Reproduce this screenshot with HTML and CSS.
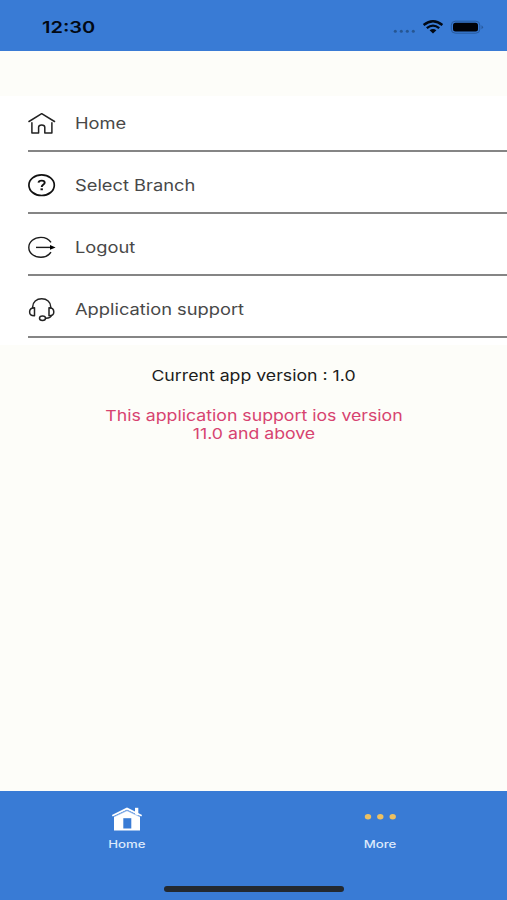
FILE: index.html
```html
<!DOCTYPE html>
<html lang="en">
<head>
<meta charset="utf-8">
<title>More</title>
<link rel="stylesheet" href="styles.css">
</head>
<body>
<div class="screen">
  <header class="status">
    <span class="time"><span class="wide">12:30</span></span>
    <svg class="signals" width="94" height="20" viewBox="0 0 94 20">
      <g fill="#265692"><circle cx="5.300" cy="14.300" r="1.500"/><circle cx="11.300" cy="14.300" r="1.500"/><circle cx="17.300" cy="14.300" r="1.500"/><circle cx="23.300" cy="14.300" r="1.500"/></g>
      <g fill="none" stroke="#020914" stroke-width="2.300"><path d="M33.600 8Q43 0.400 52.400 8"/><path d="M36.800 11.200Q43 6 49.200 11.200"/></g>
      <path d="M39.600 13.300Q43 10.700 46.400 13.300L43 16.400Z" fill="#020914"/>
      <rect x="61.300" y="4.200" width="28.500" height="12" rx="4" fill="none" stroke="#285a9e"/>
      <rect x="63" y="5.800" width="25" height="8.800" rx="2.500" fill="#000208"/>
      <path d="M91.500 8.300Q94.500 10.200 91.500 12.200Z" fill="#285a9e"/>
    </svg>
  </header>
  <main class="content">
    <ul class="menu">
      <li class="row">
        <svg class="icon" width="28" height="24" viewBox="0 0 28 24" fill="none" stroke="#222" stroke-width="1.500" stroke-linecap="round" stroke-linejoin="round"><path d="M1 9.500L13.700 1.700L26.500 9.500"/><path d="M3.900 10.800V21H10.600V15.300Q10.600 12.900 13.700 12.900Q16.800 12.900 16.800 15.300V21H23.900V10.800"/></svg>
        <span class="label"><span class="wide">Home</span></span>
      </li>
      <li class="row">
        <svg class="icon" width="28" height="24" viewBox="0 0 28 24" fill="none" stroke="#111"><ellipse cx="13.600" cy="11.200" rx="12.700" ry="10.300" stroke-width="1.700"/><path d="M10.500 8.700Q10.700 6.600 13.700 6.600Q16.700 6.600 16.700 8.700C16.700 10.500 13.700 10.500 13.700 13" stroke-width="1.900"/><path d="M12.500 15.300H14.900" stroke-width="1.900"/></svg>
        <span class="label"><span class="wide">Select Branch</span></span>
      </li>
      <li class="row">
        <svg class="icon" width="28" height="24" viewBox="0 0 28 24" fill="none" stroke="#1c1c1c" stroke-width="1.400"><path d="M23 6.400C20.800 3.200 17 1.400 12.900 1.400C6.100 1.400 .8 5.700 .8 11.400S6.100 21.200 12.900 21.200C17 21.200 20.800 19.400 23 16.200"/><path d="M8 11.400H23"/><path d="M22 9.100L27.600 11.400L22 13.700Z" fill="#000" stroke="none"/></svg>
        <span class="label"><span class="wide">Logout</span></span>
      </li>
      <li class="row">
        <svg class="icon" width="28" height="24" viewBox="0 0 28 24" fill="none" stroke="#222" stroke-width="1.500"><path d="M4.700 10.500V8.800C4.700 4 8.500 .8 13.700 .8S22.700 4 22.700 8.800V10.500"/><path d="M6.500 9.800Q1.600 9.800 1.600 13.900T6.500 17.800Z" stroke-linejoin="round"/><path d="M21 9.800Q25.800 9.800 25.800 13.900T21 17.800Z" stroke-linejoin="round"/><path d="M23.300 17.700Q22.700 20.300 17.500 20.200"/><ellipse cx="14.500" cy="20.200" rx="3" ry="2.200"/></svg>
        <span class="label"><span class="wide">Application support</span></span>
      </li>
    </ul>
    <p class="version"><span class="wide">Current app version : 1.0</span></p>
    <p class="notice"><span class="wide">This application support ios version<br>11.0 and above</span></p>
  </main>
  <footer class="footer">
    <nav class="tabs">
      <div class="tab">
        <svg width="32" height="26" viewBox="0 0 32 26"><path d="M16 4.500L3 10.800V24.500H29V10.800Z" fill="#fff"/><path d="M24 1.800H27.300V9.500H24Z" fill="#fff"/><path d="M1.300 9.700L16 2.600L30.700 9.700" fill="none" stroke="#fff" stroke-width="1.800"/><path d="M3 10.800L16 4.700L29 10.800" fill="none" stroke="#8db5ec" stroke-width=".7"/><path d="M12.300 12.200H20.300V22.500H12.300Z" fill="#397bd5"/></svg>
        <span class="wide">Home</span>
      </div>
      <div class="tab">
        <svg width="32" height="26" viewBox="0 0 32 26" fill="#ecc062"><ellipse cx="4" cy="10.700" rx="3.200" ry="2.700"/><ellipse cx="16.300" cy="10.700" rx="3.200" ry="2.700"/><ellipse cx="28.700" cy="10.700" rx="3.200" ry="2.700"/></svg>
        <span class="wide">More</span>
      </div>
    </nav>
    <div class="indicator"></div>
  </footer>
</div>
</body>
</html>
```
FILE: styles.css
```css
* { box-sizing: border-box; }
body { margin: 0; font-family: Inter, "Liberation Sans", sans-serif; }
.screen { width: 507px; height: 900px; display: flex; flex-direction: column; background: #fdfdf9; }
.wide { display: inline-block; transform: scaleX(1.18); white-space: nowrap; }
.status { height: 51px; flex: none; display: flex; justify-content: space-between; align-items: flex-start; padding: 17px 23px 0 42px; background: #397bd5; }
.time { font-size: 16px; line-height: 21px; font-weight: 600; color: #020914; }
.time .wide, .label .wide { transform-origin: left center; }
.time .wide { transform: scaleX(1.25); }
.signals { display: block; }
.content { flex: 1; }
.menu { list-style: none; margin: 45px 0 0; padding: 0 0 7px; background: #fff; }
.row { height: 62px; margin-left: 28px; padding-top: 8px; display: flex; align-items: center; border-bottom: 2px solid #858585; }
.row:first-child { height: 56px; padding-top: 2px; }
.icon { flex: none; display: block; }
.label { margin-left: 19px; font-size: 15.5px; line-height: 20px; color: #484848; }
.version, .notice { margin: 0; text-align: center; font-size: 15px; line-height: 18px; }
.version { margin-top: 22px; color: #1c1c1c; }
.notice { margin-top: 22px; color: #d74370; }
.footer { height: 109px; flex: none; display: flex; flex-direction: column; align-items: center; justify-content: space-between; padding: 15px 0 8px; background: #397bd5; }
.tabs { display: flex; align-self: stretch; }
.tab { flex: 1; display: flex; flex-direction: column; align-items: center; font-size: 10.5px; line-height: 14px; font-weight: 500; color: #dce9fb; }
.tab svg { display: block; margin-bottom: 6px; }
.tab .wide { transform: scaleX(1.26); }
.indicator { width: 180px; height: 6px; border-radius: 3px; background: #232930; }
```
